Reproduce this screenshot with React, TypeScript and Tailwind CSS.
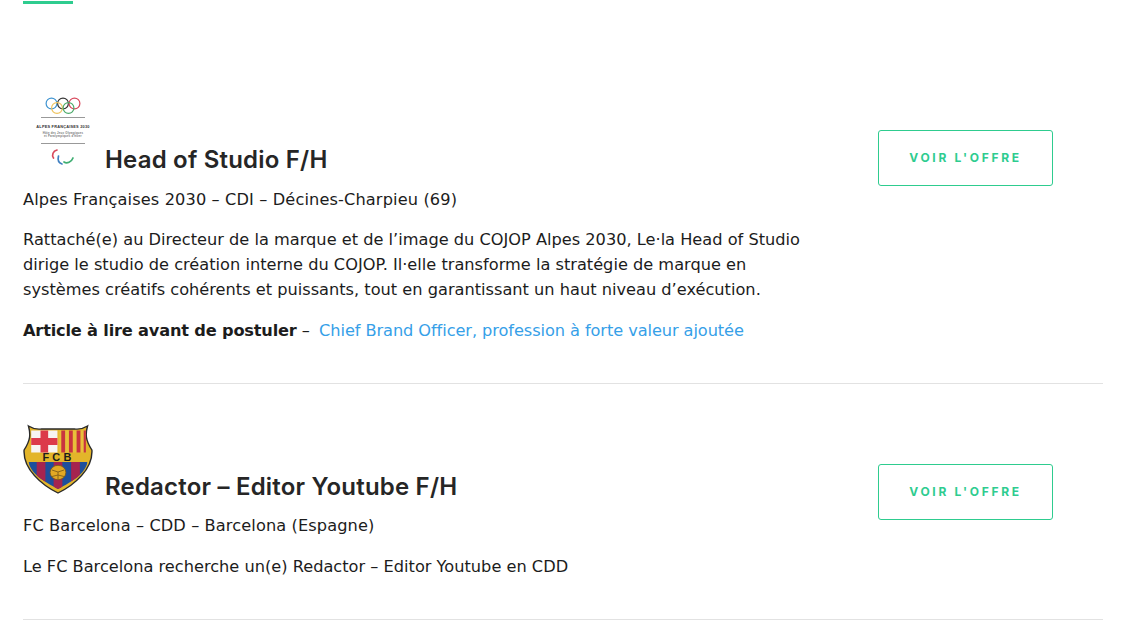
const BODY = "font-['DejaVu_Sans',Verdana,sans-serif]";

function OlympicLogo() {
  return (
    <svg width="70" height="75" viewBox="0 0 70 75" className="shrink-0">
      <g fill="none" strokeWidth="1.2">
        <circle cx="28.5" cy="9.5" r="5.4" stroke="#3f94d1" />
        <circle cx="40" cy="9.5" r="5.4" stroke="#333333" />
        <circle cx="51.5" cy="9.5" r="5.4" stroke="#d8495d" />
        <circle cx="34" cy="14" r="5.4" stroke="#eec35d" />
        <circle cx="45.5" cy="14" r="5.4" stroke="#4caa6a" />
      </g>
      <rect x="18" y="23" width="44" height="1" fill="#999999" />
      <text x="40" y="33.500" textAnchor="middle" fontFamily="Liberation Sans, sans-serif" fontSize="3.900" fontWeight="700" fill="#333333">
        ALPES FRANÇAISES 2030
      </text>
      <text x="40" y="39.500" textAnchor="middle" fontFamily="Liberation Sans, sans-serif" fontSize="2.800" fill="#777777">
        Hôte des Jeux Olympiques
      </text>
      <text x="40" y="43" textAnchor="middle" fontFamily="Liberation Sans, sans-serif" fontSize="2.800" fill="#777777">
        et Paralympiques d'hiver
      </text>
      <rect x="18" y="49" width="44" height="1" fill="#999999" />
      <g fill="none" strokeWidth="1.7" strokeLinecap="round">
        <path d="M30.500 64c-2-3-.5-7 3.500-8" stroke="#d8495d" />
        <path d="M39 70c-3-1-4.500-4-3.500-8" stroke="#3f7fc1" />
        <path d="M50 64c-1.500 4-6 6-9 4" stroke="#3fae72" />
      </g>
    </svg>
  );
}

function BarcaLogo() {
  return (
    <svg width="70" height="70" viewBox="3 0 64 70" preserveAspectRatio="none" className="shrink-0">
      <defs>
        <clipPath id="lower">
          <path d="M8 38H62C60 50 47 58 35 65C23 58 10 50 8 38Z" />
        </clipPath>
      </defs>
      <path
        d="M8 2Q14 6 20 5H50Q56 6 62 2C60 10 60 16 66 26C67 45 50 61 35 69C20 61 3 45 4 26C10 16 10 10 8 2Z"
        fill="#e3b52a"
        stroke="#2a2a2a"
        strokeWidth="1.3"
      />
      <rect x="10.500" y="6.500" width="24" height="22" fill="#f7f4f2" />
      <rect x="19" y="6.500" width="7" height="22" fill="#dc3a4a" />
      <rect x="10.500" y="14" width="24" height="7" fill="#dc3a4a" />
      <rect x="35.500" y="6.500" width="25" height="22" fill="#e8c03a" />
      <g fill="#c9343f">
        <rect x="38" y="6.500" width="3.500" height="22" />
        <rect x="45" y="6.500" width="3.500" height="22" />
        <rect x="52" y="6.500" width="3.500" height="22" />
        <rect x="58.500" y="6.500" width="2" height="22" />
      </g>
      <text x="35.500" y="36.800" textAnchor="middle" fontFamily="Liberation Sans, sans-serif" fontSize="10" fontWeight="700" letterSpacing="3" fill="#1c1c1c">
        FCB
      </text>
      <g clipPath="url(#lower)">
        <rect x="0" y="38" width="70" height="32" fill="#1d4f9c" />
        <rect x="15.500" y="38" width="8" height="32" fill="#a5244f" />
        <rect x="31" y="38" width="8" height="32" fill="#a5244f" />
        <rect x="47" y="38" width="8" height="32" fill="#a5244f" />
      </g>
      <circle cx="35" cy="48.500" r="7.200" fill="#e3a924" stroke="#7a5a18" strokeWidth="0.8" />
      <path d="M29.500 46l5.500 2 5.500-2M35 48v7M29.500 52.500l5.500-1.500 5.500 1.500" fill="none" stroke="#7a5a18" strokeWidth="0.8" />
    </svg>
  );
}

function OfferButton() {
  return (
    <a
      href="#"
      className="flex h-14 w-[175px] items-center justify-center rounded-[3px] border border-[#2ecc8f] pb-px font-['Inter',sans-serif] text-[12px] font-bold tracking-[2.7px] text-[#2ecc8f]"
    >
      VOIR L'OFFRE
    </a>
  );
}

export default function App() {
  return (
    <main className={`min-h-screen bg-white pr-[30px] pl-[23px] text-[16.2px] leading-[25px] text-[#1c1c1c] ${BODY}`}>
      <div className="pt-px">
        <div className="h-[3px] w-[50px] bg-[#2ecc8f]" />
      </div>

      <article className="mt-[90px] flex border-b border-[#e2e2e2] pb-[40px]">
        <div className="w-[855px]">
          <h2 className="flex items-end gap-3 font-['Inter',sans-serif] text-[24px] leading-[29px] font-semibold tracking-[0.2px] text-[#262626]">
            <OlympicLogo />
            <span className="mb-[-5px]">Head of Studio F/H</span>
          </h2>
          <p className="mt-[18px] tracking-[0.12px]">Alpes Françaises 2030 – CDI – Décines-Charpieu (69)</p>
          <p className="mt-[15px] w-[790px]">
            Rattaché(e) au Directeur de la marque et de l’image du COJOP Alpes 2030, Le·la Head of Studio
            dirige le studio de création interne du COJOP. Il·elle transforme la stratégie de marque en
            systèmes créatifs cohérents et puissants, tout en garantissant un haut niveau d’exécution.
          </p>
          <p className="mt-[16px]">
            <strong className="font-bold tracking-[-0.18px]">Article à lire avant de postuler</strong> –{" "}
            <a href="#" className="ml-1 tracking-[-0.08px] text-[#36a0e8]">
              Chief Brand Officer, profession à forte valeur ajoutée
            </a>
          </p>
        </div>
        <div className="pt-[36px]">
          <OfferButton />
        </div>
      </article>

      <article className="mt-[40px] flex border-b border-[#e2e2e2] pb-[40px]">
        <div className="w-[855px]">
          <h2 className="flex items-end gap-3 font-['Inter',sans-serif] text-[24px] leading-[29px] font-semibold tracking-[0.2px] text-[#262626]">
            <BarcaLogo />
            <span className="mb-[-7px]">Redactor – Editor Youtube F/H</span>
          </h2>
          <p className="mt-[19px] tracking-[0.1px]">FC Barcelona – CDD – Barcelona (Espagne)</p>
          <p className="mt-[16px]">Le FC Barcelona recherche un(e) Redactor – Editor Youtube en CDD</p>
        </div>
        <div className="pt-[40px]">
          <OfferButton />
        </div>
      </article>
    </main>
  );
}
